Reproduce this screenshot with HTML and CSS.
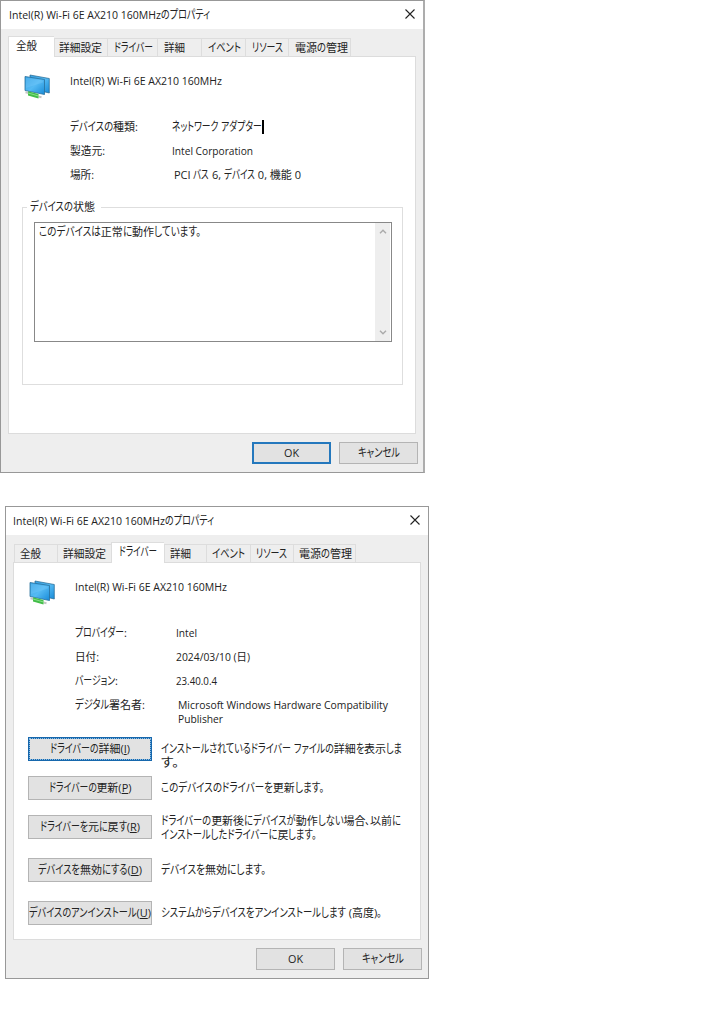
FILE: index.html
```html
<!DOCTYPE html>
<html lang="ja">
<head>
<meta charset="utf-8">
<title>Intel(R) Wi-Fi 6E AX210 160MHzのプロパティ</title>
<link rel="stylesheet" href="styles.css">
</head>
<body>
<svg class="defs" width="0" height="0">
  <defs>
    <linearGradient id="screen" x1="0" y1="0" x2="1" y2="1"><stop offset="0" stop-color="#36a2e4"/><stop offset=".5" stop-color="#55baf3"/><stop offset="1" stop-color="#188bd8"/></linearGradient>
    <symbol id="adapter" viewBox="0 0 27 26">
      <path d="M6 1 L25.3 4.5 V19 L21 18 L6 14 Z" fill="url(#screen)" stroke="#22668f" stroke-width=".7"/>
      <path d="M1 2.5 L20.5 5.5 V20.5 L1 16.5 Z" fill="url(#screen)" stroke="#286f9b" stroke-width=".8"/>
      <path d="M2 3.8 L19 6.5 V8.5 L2 14 Z" fill="#8bd5ff" opacity=".25"/>
      <path d="M1.5 18.2 L4.5 19 M14.5 22.5 L17.5 23.3" stroke="#c5c5c5" stroke-width="2"/>
      <path d="M4 17.3 L14.5 20 V24.5 L4 21.5 Z" fill="#42bd48"/>
      <path d="M4 19 L14.5 22" stroke="#86df88" stroke-width="1"/>
    </symbol>
  </defs>
</svg>

<section class="dialog first">
  <header class="titlebar"><h1><span class="t" data-w="152">Intel(R) Wi-Fi 6E AX210 160MHz</span><span class="t" data-w="49">のプロパティ</span></h1>
    <svg class="close" viewBox="0 0 10 10"><path d="M.5 .5 L9.5 9.5 M9.5 .5 L.5 9.5"/></svg></header>
  <nav class="tabs tabs-general">
    <div class="tab active"><span class="t" data-w="21">全般</span></div>
    <div class="tab"><span class="t" data-w="43">詳細設定</span></div>
    <div class="tab"><span class="t" data-w="39">ドライバー</span></div>
    <div class="tab"><span class="t" data-w="21">詳細</span></div>
    <div class="tab"><span class="t" data-w="33">イベント</span></div>
    <div class="tab"><span class="t" data-w="31">リソース</span></div>
    <div class="tab"><span class="t" data-w="53">電源の管理</span></div>
  </nav>
  <main class="panel">
    <div class="device"><svg class="icon"><use href="#adapter"/></svg><span class="t" data-w="152">Intel(R) Wi-Fi 6E AX210 160MHz</span></div>
    <div class="props">
      <span><span class="t" data-w="68">デバイスの種類:</span></span><span class="editing"><span class="t" data-w="90">ネットワーク アダプター</span><i class="caret"></i></span>
      <span><span class="t" data-w="35">製造元:</span></span><span><span class="t" data-w="81">Intel Corporation</span></span>
      <span><span class="t" data-w="24">場所:</span></span><span class="inset"><span class="t" data-w="127">PCI バス 6, デバイス 0, 機能 0</span></span>
    </div>
    <div class="group">
      <div class="legend"><span class="t" data-w="65">デバイスの状態</span></div>
      <div class="status">
        <div class="status-text"><span class="t" data-w="162">このデバイスは正常に動作しています。</span></div>
        <div class="scroll"><svg viewBox="0 0 8 5"><path d="M1 4.2 L4 1.2 L7 4.2"/></svg><svg viewBox="0 0 8 5"><path d="M1 .8 L4 3.8 L7 .8"/></svg></div>
      </div>
    </div>
  </main>
  <footer><button class="default"><span class="t" data-w="15">OK</span></button><button><span class="t" data-w="42">キャンセル</span></button></footer>
</section>

<section class="dialog second">
  <header class="titlebar"><h1><span class="t" data-w="152">Intel(R) Wi-Fi 6E AX210 160MHz</span><span class="t" data-w="49">のプロパティ</span></h1>
    <svg class="close" viewBox="0 0 10 10"><path d="M.5 .5 L9.5 9.5 M9.5 .5 L.5 9.5"/></svg></header>
  <nav class="tabs tabs-driver">
    <div class="tab"><span class="t" data-w="21">全般</span></div>
    <div class="tab"><span class="t" data-w="43">詳細設定</span></div>
    <div class="tab active"><span class="t" data-w="38">ドライバー</span></div>
    <div class="tab"><span class="t" data-w="21">詳細</span></div>
    <div class="tab"><span class="t" data-w="33">イベント</span></div>
    <div class="tab"><span class="t" data-w="31">リソース</span></div>
    <div class="tab"><span class="t" data-w="53">電源の管理</span></div>
  </nav>
  <main class="panel">
    <div class="device"><svg class="icon"><use href="#adapter"/></svg><span class="t" data-w="152">Intel(R) Wi-Fi 6E AX210 160MHz</span></div>
    <div class="props driver">
      <span><span class="t" data-w="52">プロバイダー:</span></span><span><span class="t" data-w="21">Intel</span></span>
      <span><span class="t" data-w="24">日付:</span></span><span><span class="t" data-w="74">2024/03/10 (日)</span></span>
      <span><span class="t" data-w="43">バージョン:</span></span><span><span class="t" data-w="41">23.40.0.4</span></span>
      <span><span class="t" data-w="70">デジタル署名者:</span></span><span class="inset"><span class="t" data-w="210">Microsoft Windows Hardware Compatibility</span><br><span class="t" data-w="45">Publisher</span></span>
    </div>
    <div class="actions">
      <button class="focused"><span class="t" data-w="80">ドライバーの詳細(<u>I</u>)</span></button><p><span class="t" data-w="241">インストールされているドライバー ファイルの詳細を表示しま</span><br><span class="t" data-w="18">す。</span></p>
      <button><span class="t" data-w="83">ドライバーの更新(<u>P</u>)</span></button><p><span class="t" data-w="163">このデバイスのドライバーを更新します。</span></p>
      <button><span class="t" data-w="100">ドライバーを元に戻す(<u>R</u>)</span></button><p class="raised"><span class="t" data-w="240">ドライバーの更新後にデバイスが動作しない場合、以前に</span><br><span class="t" data-w="156">インストールしたドライバーに戻します。</span></p>
      <button><span class="t" data-w="104">デバイスを無効にする(<u>D</u>)</span></button><p><span class="t" data-w="105">デバイスを無効にします。</span></p>
      <button><span class="t" data-w="122">デバイスのアンインストール(<u>U</u>)</span></button><p><span class="t" data-w="221">システムからデバイスをアンインストールします (高度)。</span></p>
    </div>
  </main>
  <footer><button><span class="t" data-w="15">OK</span></button><button><span class="t" data-w="42">キャンセル</span></button></footer>
</section>
<script src="fit.js"></script>
</body>
</html>
```
FILE: styles.css
```css
* { box-sizing: border-box; }
body { margin: 0; width: 724px; height: 1024px; overflow: hidden; background: #fff; color: #222; font: 11px/14px "Open Sans", "Noto Sans CJK JP", sans-serif; font-feature-settings: "palt"; }
.defs { display: block; height: 0; }
h1, p { margin: 0; font: inherit; }
.t { display: inline-block; white-space: nowrap; vertical-align: top; }
.run { display: inline-block; vertical-align: top; }
.run > span { display: inline-block; vertical-align: top; transform-origin: 0 50%; }
.kana { font-size: 12px; }
u { text-underline-offset: 1px; text-decoration-thickness: 1px; }

.dialog { width: 425px; height: 473px; background: #eee; border: 1px solid #989898; border-right: 2px solid #adadad; }
.second { margin: 33px 0 0 5px; width: 424px; border-right: 1px solid #999; }
.titlebar { height: 28px; background: #fff; display: flex; justify-content: space-between; padding: 7px 8px 0 8px; }
.second .titlebar { padding-left: 7px; }
.titlebar h1 { display: flex; }
.close { width: 10px; height: 10px; margin-top: 1px; fill: none; stroke: #222; stroke-width: 1.1; }

.tabs { display: grid; height: 27px; padding-top: 9px; margin-left: 7px; }
.tabs-general { grid-template-columns: 46px 53px 50px 44px 44px 43px 63px; }
.tabs-driver { grid-template-columns: 43px 54px 53px 42px 44px 43px 63px; padding-left: 1px; }
.tab { height: 18px; border: 1px solid #ddd; border-width: 1px 0 0 1px; padding: 2px 0 0 4px; }
.tab:last-child { border-right-width: 1px; }
.tab:nth-child(n+3) { padding-left: 6px; }
.tab:first-child { padding-left: 5px; }
.tabs-driver .tab:nth-child(2) { padding-left: 5px; }
.tabs-driver .tab:nth-child(n+4) { padding-left: 5px; }
.tab.active { height: 21px; margin-top: -2px; background: #fff; padding: 2px 0 0 7px; z-index: 1; }

.panel { width: 408px; height: 378px; margin-left: 7px; background: #fff; border: 1px solid #dcdcdc; }
.device { display: flex; height: 58px; padding: 17px 0 0 15px; }
.icon { width: 27px; height: 26px; margin-right: 19px; }
.props { display: grid; grid-template-columns: 102px 1fr; grid-auto-rows: 24px; padding: 5px 0 0 61px; }
.driver { height: 116px; }
.inset { padding-left: 2px; line-height: 13.5px; }
.second .props > :nth-child(even) { margin-left: -1px; }
.editing { display: flex; }
.caret { width: 2.5px; height: 14px; background: #000; }

.group { margin: 15px 12px 0 13px; height: 178px; border: 1px solid #dedede; }
.legend { width: 74px; height: 14px; margin: -8px 0 0 4px; padding-left: 3px; background: #fff; }
.status { height: 120px; width: 358px; margin: 8px 0 0 11px; border: 1px solid #888; display: flex; justify-content: space-between; }
.status-text { padding: 2px 0 0 4px; }
.scroll { width: 15px; margin-right: 1px; background: #eee; display: flex; flex-direction: column; justify-content: space-between; align-items: center; padding: 6px 0; }
.scroll svg { width: 8px; height: 5px; fill: none; stroke: #aaa; stroke-width: 1.4; }

button { font: inherit; font-feature-settings: inherit; color: inherit; padding: 0; border: 1px solid #b4b4b4; background: #e2e2e2; border-radius: 0; display: flex; justify-content: center; align-items: center; height: 22px; }
footer { display: flex; justify-content: flex-end; gap: 8px; padding: 8px 6px 0 0; }
.first footer { padding-right: 5px; }
footer button { width: 79px; }
.default { border: 2px solid #2478bd; }
.actions { display: grid; grid-template-columns: 124px 1fr; grid-template-rows: 39px 39px 43px 43px 38px; column-gap: 9px; padding-left: 14px; }
.actions button { height: 24px; }
.actions .focused { border: 2px solid #1768ad; outline: 1px dotted #8ebde2; outline-offset: -2px; }
.actions p { padding-top: 5px; }
.actions .raised { padding-top: 0; margin-top: -1px; }
```
FILE: fit.js
```js
// Condenses kana runs so each label takes its dialog width; kanji keep full width.
function run(text, isKana) {
  const outer = document.createElement('span');
  const inner = document.createElement('span');
  outer.className = isKana ? 'run kana' : 'run';
  inner.textContent = text;
  inner.style.whiteSpace = 'pre';
  outer.append(inner);
  return outer;
}
document.querySelectorAll('.t').forEach(label => {
  const target = Number(label.dataset.w);
  const nodes = [];
  const walker = document.createTreeWalker(label, NodeFilter.SHOW_TEXT);
  while (walker.nextNode()) nodes.push(walker.currentNode);
  const hasKana = /[\u3041-\u30ff]/.test(label.textContent);
  const runs = [];
  nodes.forEach(node => {
    if (node.parentNode.tagName === 'U') return;
    const parts = hasKana ? node.data.match(/[\u3001-\u30ff]+|[^\u3001-\u30ff]+/g) : [node.data];
    node.replaceWith(...parts.map(part => {
      if (hasKana && !/[\u3001-\u30ff]/.test(part)) return document.createTextNode(part);
      const el = run(part, hasKana);
      runs.push(el);
      return el;
    }));
  });
  const widths = runs.map(el => el.getBoundingClientRect().width);
  const kana = widths.reduce((a, b) => a + b, 0);
  const fixed = label.getBoundingClientRect().width - kana;
  const factor = (target - fixed) / kana;
  runs.forEach((el, i) => {
    el.style.width = widths[i] * factor + 'px';
    el.firstChild.style.transform = `scaleX(${factor})`;
  });
});
```
